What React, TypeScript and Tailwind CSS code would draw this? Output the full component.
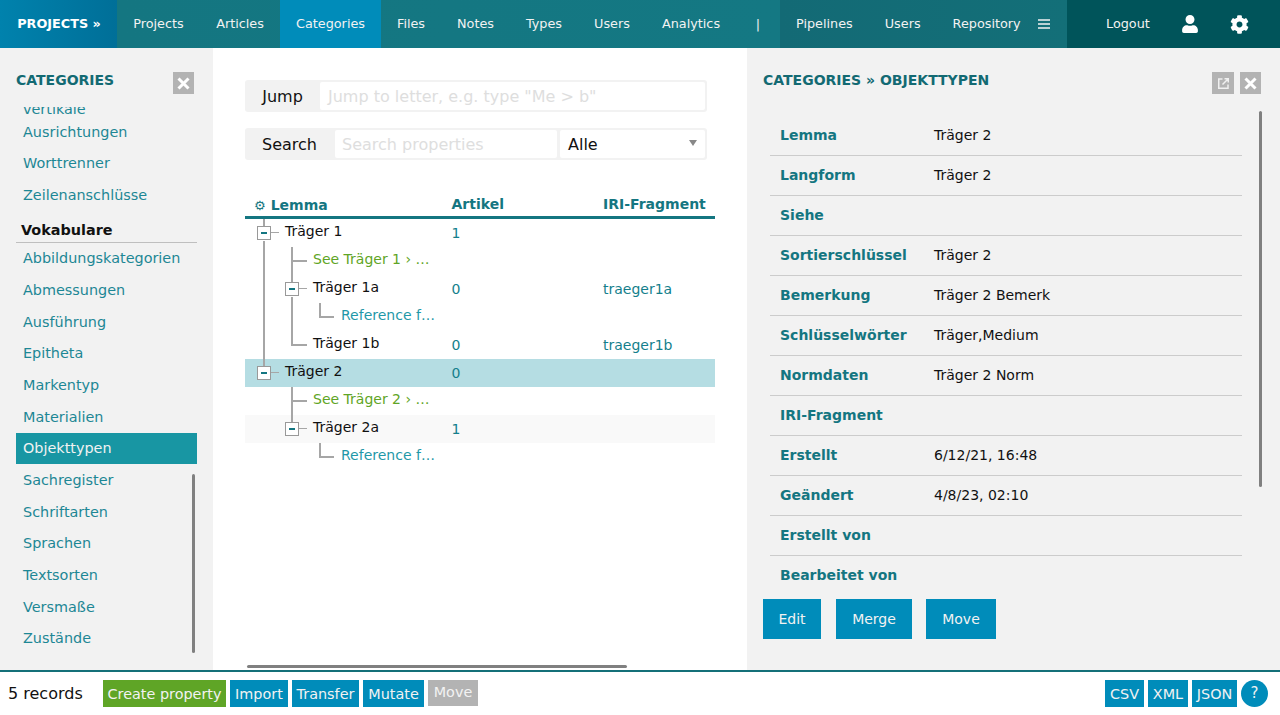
import type { ReactNode } from "react";
import { FaCog, FaUser } from "react-icons/fa";

const FONT = "font-['DejaVu_Sans','Liberation_Sans',sans-serif]";

const nav1 = [
  { label: "Projects", w: "w-[83px]" },
  { label: "Articles", w: "w-[80px]" },
  { label: "Categories", w: "w-[101px]", active: true },
  { label: "Files", w: "w-[60px]" },
  { label: "Notes", w: "w-[69px]" },
  { label: "Types", w: "w-[68px]" },
  { label: "Users", w: "w-[68px]" },
  { label: "Analytics", w: "w-[90px]" },
  { label: "|", w: "w-[44px]" },
];

const vocab = ["Abbildungskategorien", "Abmessungen", "Ausführung", "Epitheta", "Markentyp", "Materialien", "Objekttypen", "Sachregister", "Schriftarten", "Sprachen", "Textsorten", "Versmaße", "Zustände"];

const details = [
  ["Lemma", "Träger 2"],
  ["Langform", "Träger 2"],
  ["Siehe", ""],
  ["Sortierschlüssel", "Träger 2"],
  ["Bemerkung", "Träger 2 Bemerk"],
  ["Schlüsselwörter", "Träger,Medium"],
  ["Normdaten", "Träger 2 Norm"],
  ["IRI-Fragment", ""],
  ["Erstellt", "6/12/21, 16:48"],
  ["Geändert", "4/8/23, 02:10"],
  ["Erstellt von", ""],
  ["Bearbeitet von", ""],
];

function CloseBox() {
  return (
    <span className="flex h-[22px] w-[21px] items-center justify-center bg-[#b3b3b3]">
      <svg width="13" height="13" viewBox="0 0 13 13"><path d="M1.5 1.5l10 10M11.5 1.5l-10 10" stroke="#fff" strokeWidth="3" /></svg>
    </span>
  );
}

function Toggle() {
  return (
    <span className="flex h-[14px] w-[14px] items-center justify-center border border-[#999] bg-white">
      <span className="h-[2px] w-[6px] bg-[#147681]" />
    </span>
  );
}

type RowProps = {
  indent: number;
  kind: "node" | "leaf" | "see" | "ref";
  text: string;
  count?: string;
  iri?: string;
  bg?: string;
  lines: ReactNode;
};

// tree connectors are drawings, they sit over the row
function Row({ indent, kind, text, count, iri, bg, lines }: RowProps) {
  const color = kind === "see" ? "text-[#5fa526]" : kind === "ref" ? "text-[#1f98a8]" : "text-[#111]";
  return (
    <div className={`relative flex h-[28px] text-[14px] ${bg ?? ""}`}>
      <svg className="absolute left-0 top-0" width="100" height="28" fill="none" stroke="#a6a6a6" strokeWidth="2">{lines}</svg>
      <div className="w-[206.5px] shrink-0" style={{ paddingLeft: indent }}>
        <span className={`relative block pt-[3px] leading-[18px] ${color}`}>{text}</span>
      </div>
      <div className="w-[151.5px] shrink-0 pt-[5px] leading-[18px] text-[#147f8c]">{count}</div>
      <div className="pt-[5px] leading-[18px] text-[#147f8c]">{iri}</div>
      {kind === "node" && (
        <div className="absolute top-[7px]" style={{ left: indent - 28 }}><Toggle /></div>
      )}
    </div>
  );
}

export default function App() {
  return (
    <div className={`flex h-[715px] w-[1280px] flex-col overflow-hidden bg-white ${FONT}`}>
      <header className="flex h-[48px] shrink-0 text-[12.8px] text-[#f2f2f2]">
        <div className="flex w-[117px] items-center justify-center bg-gradient-to-r from-[#0082ad] to-[#006f98] pl-[1px] font-bold text-white">PROJECTS »</div>
        <nav className="flex w-[663px] bg-gradient-to-r from-[#147681] to-[#147883]">
          {nav1.map((n) => (
            <span key={n.label} className={`flex items-center justify-center ${n.w} ${n.active ? "bg-[#008cba]" : ""}`}>{n.label}</span>
          ))}
        </nav>
        <nav className="flex w-[287px] items-center bg-gradient-to-r from-[#136a75] to-[#136f78] pl-[16px]">
          <span>Pipelines</span>
          <span className="ml-[32px]">Users</span>
          <span className="ml-[32px]">Repository</span>
          <svg className="ml-[17px]" width="12" height="10" viewBox="0 0 12 10"><path d="M0 1h12M0 5h12M0 9h12" stroke="#f2f2f2" strokeWidth="1.6" /></svg>
        </nav>
        <div className="flex flex-1 items-center bg-[#00545a] pl-[39px]">
          <span>Logout</span>
          <FaUser className="ml-[31px] text-white" size={18} />
          <FaCog className="ml-[31px] text-white" size={19} />
        </div>
      </header>

      <main className="flex min-h-0 flex-1">
        <aside className="flex w-[213px] shrink-0 flex-col bg-[#f2f2f2] pl-[16px]">
          <div className="flex h-[59px] shrink-0 items-start justify-between pr-[19px] pt-[24px]">
            <span className="text-[14px] font-bold leading-[17px] text-[#136a73]">CATEGORIES</span>
            <CloseBox />
          </div>
          <div className="relative h-[548px] overflow-hidden text-[14.4px] text-[#1d8795]">
            <div className="-mt-[9px] w-[181px]">
              <div className="pl-[7px] leading-[23px]">vertikale<br />Ausrichtungen</div>
              <div className="mt-[9px] pl-[7px] leading-[20px]">Worttrenner</div>
              <div className="mt-[12px] pl-[7px] leading-[20px]">Zeilenanschlüsse</div>
              <div className="mt-[16px] border-b border-[#bfbfbf] pb-[3px] pl-[5px] font-bold leading-[18px] text-[#111]">Vokabulare</div>
              <div className="-mt-[0.6px]">
                {vocab.map((v) => (
                  <div key={v} className={`flex h-[31.7px] items-center pl-[7px] pt-[1.6px] ${v === "Objekttypen" ? "bg-[#1896a3] text-[#f2f2f2]" : ""}`}>{v}</div>
                ))}
              </div>
            </div>
            <span className="absolute left-[176px] top-[367px] h-[179px] w-[3px] rounded-full bg-[#808080]" />
          </div>
        </aside>

        <section className="flex w-[534px] shrink-0 flex-col pl-[32px] pr-[32px]">
          <div className="mt-[32px] flex h-[32px] w-[462px] rounded-[3px] bg-[#f2f2f2] p-[2px] text-[16px] text-[#111]">
            <span className="flex w-[71px] items-center justify-center pt-[1px]">Jump</span>
            <span className="ml-[2px] flex flex-1 items-center rounded-[2px] bg-white pl-[8px] pt-[1px] text-[#dedede]">Jump to letter, e.g. type "Me &gt; b"</span>
          </div>
          <div className="mt-[16px] flex h-[32px] w-[462px] rounded-[3px] bg-[#f2f2f2] p-[2px] text-[16px] text-[#111]">
            <span className="flex w-[85px] items-center justify-center pt-[1px]">Search</span>
            <span className="ml-[3px] flex w-[222px] items-center rounded-[2px] bg-white pl-[7px] pt-[1px] text-[#dedede]">Search properties</span>
            <span className="relative ml-[3px] flex flex-1 items-center rounded-[2px] bg-white pl-[8px] pt-[1px]">
              Alle
              <span className="absolute right-[8px] top-[10px] h-0 w-0 border-x-[4px] border-t-[6px] border-x-transparent border-t-[#888]" />
            </span>
          </div>
          <div className="mt-[32px] w-[470px]">
            <div className="flex h-[27px] border-b-[3px] border-[#147681] text-[14px] font-bold text-[#147681]">
              <div className="flex w-[206.5px] items-center pl-[9px] pt-[3px]">
                <span className="mr-[5px] text-[13px] font-normal">⚙</span>Lemma
              </div>
              <div className="w-[151.5px] pt-[2px]">Artikel</div>
              <div className="pt-[2px]">IRI-Fragment</div>
            </div>
            <Row indent={40} kind="node" text="Träger 1" count="1" lines={<><path d="M19 0V8M19 22V28" /><path d="M26 13.500H34" strokeWidth="1" /></>} />
            <Row indent={68} kind="see" text="See Träger 1 › …" lines={<path d="M19 0V28M47 0V28M47 14H62" />} />
            <Row indent={68} kind="node" text="Träger 1a" count="0" iri="traeger1a" lines={<><path d="M19 0V28M47 0V8M47 22V28" /><path d="M54 13.500H62" strokeWidth="1" /></>} />
            <Row indent={96} kind="ref" text="Reference f…" lines={<path d="M19 0V28M47 0V28M75 0V14H89" />} />
            <Row indent={68} kind="leaf" text="Träger 1b" count="0" iri="traeger1b" lines={<path d="M19 0V28M47 0V14H62" />} />
            <Row indent={40} kind="node" text="Träger 2" count="0" bg="bg-[#b5dde3]" lines={<><path d="M19 0V8" /><path d="M26 13.500H34" strokeWidth="1" /></>} />
            <Row indent={68} kind="see" text="See Träger 2 › …" lines={<path d="M47 0V28M47 14H62" />} />
            <Row indent={68} kind="node" text="Träger 2a" count="1" bg="bg-[#f9f9f9]" lines={<><path d="M47 0V8" /><path d="M54 13.500H62" strokeWidth="1" /></>} />
            <Row indent={96} kind="ref" text="Reference f…" lines={<path d="M75 0V14H89" />} />
          </div>
          <div className="mb-[2px] ml-[2px] mt-auto h-[3px] w-[380px] rounded-full bg-[#808080]" />
        </section>

        <aside className="flex min-w-0 flex-1 flex-col bg-[#f2f2f2] pl-[16px] pr-[19px]">
          <div className="flex h-[63px] shrink-0 items-start justify-between pt-[24px]">
            <span className="text-[14px] font-bold leading-[17px] text-[#136a73]">CATEGORIES » OBJEKTTYPEN</span>
            <div className="flex gap-[6px]">
              <span className="flex h-[22px] w-[22px] items-center justify-center bg-[#b3b3b3]">
                <svg width="11" height="11" viewBox="0 0 11 11" fill="none" stroke="#f0f0f0" strokeWidth="1.5"><path d="M4.500 1H.75v9.250H10V6.500M4.500 6.500l5.500-5.500M6.500 .75h3.750V4.500" /></svg>
              </span>
              <CloseBox />
            </div>
          </div>
          <div className="relative min-h-0 flex-1">
            <div className="h-[480px] overflow-hidden pl-[7px] pr-[19px] pt-[5px] text-[14px]">
              {details.map(([k, v]) => (
                <div key={k} className="flex h-[40px] items-center border-b border-[#cccccc] pl-[10px]">
                  <span className="w-[154px] shrink-0 font-bold text-[#147681]">{k}</span>
                  <span className="text-[#111]">{v}</span>
                </div>
              ))}
            </div>
            <span className="absolute right-[-1px] top-0 h-[376px] w-[3px] rounded-full bg-[#808080]" />
            <div className="absolute bottom-[31px] left-0 flex text-[14px] text-[#f2f2f2]">
              <span className="flex h-[40px] w-[58px] items-center justify-center bg-[#008cba]">Edit</span>
              <span className="ml-[15px] flex h-[40px] w-[76px] items-center justify-center bg-[#008cba]">Merge</span>
              <span className="ml-[14px] flex h-[40px] w-[70px] items-center justify-center bg-[#008cba]">Move</span>
            </div>
          </div>
        </aside>
      </main>

      <footer className="flex h-[45px] shrink-0 items-center border-t-[2px] border-[#147078] pl-[8px] pr-[12px] text-[14.4px] text-[#f2f2f2]">
        <span className="w-[95px] text-[16px] text-[#111]">5 records</span>
        <div className="flex gap-[4px]">
          <span className="flex h-[27px] w-[123px] items-center justify-center bg-[#5fa526] pt-[2px]">Create property</span>
          <span className="flex h-[27px] w-[58px] items-center justify-center bg-[#008cba] pt-[2px]">Import</span>
          <span className="flex h-[27px] w-[67px] items-center justify-center bg-[#008cba] pt-[2px]">Transfer</span>
          <span className="flex h-[27px] w-[61px] items-center justify-center bg-[#008cba] pt-[2px]">Mutate</span>
          <span className="flex h-[26px] w-[50px] items-center justify-center self-start bg-[#b3b3b3]">Move</span>
        </div>
        <div className="ml-auto flex items-center gap-[4px]">
          <span className="flex h-[27px] w-[39px] items-center justify-center bg-[#008cba] pt-[2px]">CSV</span>
          <span className="flex h-[27px] w-[40px] items-center justify-center bg-[#008cba] pt-[2px]">XML</span>
          <span className="flex h-[27px] w-[45px] items-center justify-center bg-[#008cba] pt-[2px]">JSON</span>
          <span className="flex h-[27px] w-[27px] items-center justify-center rounded-full bg-[#008cba] text-[15px]">?</span>
        </div>
      </footer>
    </div>
  );
}
